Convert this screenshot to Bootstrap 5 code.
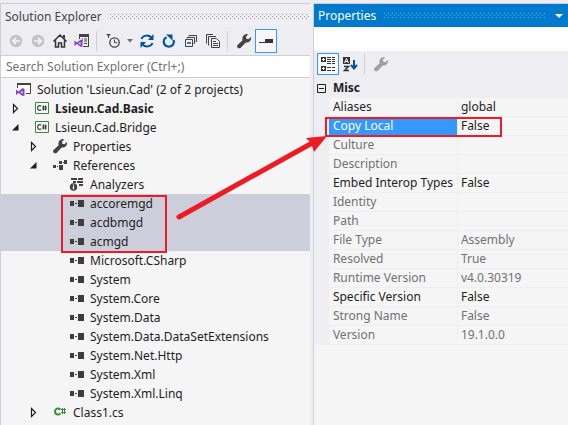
<!DOCTYPE html>
<html lang="en">
<head>
<meta charset="utf-8">
<meta name="viewport" content="width=device-width, initial-scale=1">
<title>Solution Explorer</title>
<link href="https://cdn.jsdelivr.net/npm/bootstrap@5.3.0/dist/css/bootstrap.min.css" rel="stylesheet">
<style>
:root{--chrome:#eeeef2;--line:#cccedb;--pane:#f5f5f5;--ink:#1e1e1e;--red:#ed1c24;--blue:#3399ff}
body{font-family:"Noto Sans","Open Sans",sans-serif;font-size:12px;line-height:19px;color:var(--ink);background:var(--chrome)}
.ide{gap:3px;padding-top:3px}
.tool-pane{border-left:1px solid var(--line);border-top:1px solid var(--line);min-width:0}
.explorer{flex:310 1 0}
.props{flex:255 1 0}
.pane-title{height:24px;gap:8px}
.pane-title h1{font-size:12px;line-height:19px;margin:0;font-weight:400}
.explorer .pane-title{color:#444;padding-left:4px}
.props .pane-title{color:#fff;background:#007acc;padding:0 3px 0 4px;height:23px}
.grip{height:5px;--dot:#999;background:conic-gradient(from 0deg at 1px 1px,transparent 75%,var(--dot) 0) 0 0/4px 4px,conic-gradient(from 0deg at 1px 1px,transparent 75%,var(--dot) 0) 2px 2px/4px 4px}
.props .grip{--dot:#59a8de}
.tb{border:1px solid transparent;background:none;padding:0;width:22px;height:24px;display:flex;align-items:center;justify-content:center;flex:none}
.props .tb{height:22px}
.tb.slim{width:12px}
.tb.on{border-color:var(--blue);background:#f7f7fa}
.tb svg,.pane-title svg,.tree svg{display:block;flex:none}
.bar{height:27px;padding-bottom:2px}
.explorer .bar{padding-left:4px}
.props .bar{height:28px;padding-left:3px}
.vsep{width:1px;height:20px;background:var(--line);flex:none;margin:0 5px 0 3px}
.find{height:23px;border:solid var(--line);border-width:1px 0;background:#fff;padding:0 5px;width:100%;color:#555;font-size:12px;border-radius:0;outline:0}
.find::placeholder{color:#717171;opacity:1}
.tree{background:var(--pane);padding-top:2px}
.node{height:19px;white-space:nowrap}
.node>button{border:0;background:none;padding:0;width:18px;height:19px;display:flex;align-items:center;justify-content:center}
.node>svg{width:16px;height:16px;margin-bottom:1px}
.ic{width:16px;height:16px}
.lv0{padding-left:15px;gap:5px}
.lv1{padding-left:5px}.node.lv1>svg{margin:0 5px 1px 10px}
.lv2{padding-left:23px}.node.lv2>svg{margin:0 5px 1px 10px}
.lv3{padding-left:68px;gap:5px}
.chosen{background:var(--line);position:relative}
.chosen::after{content:"";position:absolute;left:60px;top:1px;width:106px;height:58px;border:2px solid var(--red)}
.combo{height:24px;background:#fff}
.grid-table{table-layout:fixed;width:100%;border-collapse:separate;border-spacing:0}
.grid-table th,.grid-table td{height:19px;line-height:18px;padding:0 0 0 4px;font-weight:400;white-space:nowrap;overflow:hidden;border-bottom:1px solid var(--chrome);background:var(--pane)}
.grid-table td{padding-left:3px}
.grid-table th[scope=row]{border-right:1px solid var(--chrome)}
.grid-table .gut,.grid-table .cat{background:var(--chrome)}
.grid-table .cat{font-weight:700}
.c-gut{width:15px}.c-name{width:129px}
.off th[scope=row],.off td{color:#717171}
.grid-table .picked th{background:var(--blue);color:#fff;position:relative;overflow:visible}
.picked th::after{content:"";position:absolute;left:-4px;top:0;width:177px;height:20px;border:2px solid var(--red)}
.rest{background:var(--pane)}
.arrow{position:absolute;left:0;top:0;pointer-events:none}
</style>
<script src="https://cdn.jsdelivr.net/npm/bootstrap@5.3.0/dist/js/bootstrap.bundle.min.js"></script>
</head>
<body class="overflow-hidden">
<svg class="d-none" xmlns="http://www.w3.org/2000/svg">
<symbol id="wrench" viewBox="0 0 16 16"><path d="M1.300 12.300 6.600 7.200C5.900 4.500 7.200 1.800 10.200 1.100l2 .1-2.300 2.500.4 2.100 2.100.4L15 3.900c.7 3.300-1.600 6.100-5.300 5.600L4.500 14.900c-2.100 1.200-4.100-.8-3.200-2.600Z"/></symbol>
<symbol id="asm" viewBox="0 0 16 16"><path fill="#3d3d3d" d="M1 6h4v5H1zM6 8h2v1H6zM9 5h6v7H9z"/></symbol>
<symbol id="cs" viewBox="0 0 16 16"><path fill="#f7f7f7" stroke="#388a34" d="M1.500 2.500h13v11h-13z"/><path fill="none" stroke="#424242" stroke-width="1.200" d="M7.200 6.200C5.500 5 3.600 6 3.600 8s1.900 3 3.600 1.800"/><path fill="none" stroke="#424242" d="M9.500 5.500v5M11.500 5.500v5M8 7h5M8 9h5"/></symbol>
<symbol id="shut" viewBox="0 0 9 11"><path fill="#fff" stroke="#1e1e1e" stroke-width="1.200" d="M2.500 1.500v8L6.500 5.500z"/></symbol>
<symbol id="opened" viewBox="0 0 9 11"><path fill="#1e1e1e" d="M7.500 2v6.500H1z"/></symbol>
</svg>
<div class="ide d-flex vh-100 position-relative">
<section class="tool-pane explorer d-flex flex-column">
 <header class="pane-title d-flex align-items-center"><h1>Solution Explorer</h1><span class="grip flex-grow-1"></span></header>
 <div class="bar d-flex align-items-center" role="toolbar" aria-label="Explorer commands">
  <button class="tb" aria-label="Back"><svg class="ic" viewBox="0 0 16 16"><circle cx="8" cy="8" r="6.200" fill="#c3c3c6"/><path d="M12 8H5M8 4.800 4.800 8 8 11.200" stroke="#f4f4f6" stroke-width="1.700" fill="none"/></svg></button>
  <button class="tb" aria-label="Forward"><svg class="ic" viewBox="0 0 16 16"><circle cx="8" cy="8" r="6.200" fill="#c3c3c6"/><path d="M4 8h7M8 4.800 11.200 8 8 11.200" stroke="#f4f4f6" stroke-width="1.700" fill="none"/></svg></button>
  <button class="tb" aria-label="Home"><svg class="ic" viewBox="0 0 16 16"><path d="m1.500 8.500 6.500-6.500 6.500 6.500M3.500 7.500v6.500h3v-4h3v4h3V7.500" fill="none" stroke="#333" stroke-width="1.500"/><path d="M11 2h2v4l-2-2z" fill="#333"/></svg></button>
  <button class="tb" aria-label="Solution view"><svg class="ic" viewBox="0 0 16 16"><path fill="#424242" d="M5 1h10v13H9v-1h5V4H6v2H5z"/><path d="M8 6h1M10 6h3M10 8h3M10 10.500h3M8 8h1" stroke="#424242" fill="none"/><path d="m.5 7.500 2.500 2 4-3 1.500.7v6L7 14l-4-3-2.500 2zM6.500 9 4.500 10.300l2 1.500z" fill="#8a3fd0" fill-rule="evenodd"/></svg></button>
  <span class="vsep"></span>
  <button class="tb" aria-label="Pending changes filter"><svg class="ic" viewBox="0 0 16 16"><path d="M1 1h5L4 3v2H3V3z" fill="#424242"/><circle cx="9.500" cy="9.500" r="4.700" fill="none" stroke="#424242" stroke-width="1.300"/><path d="M9.500 6.500v3.200h2.700" fill="none" stroke="#424242"/></svg></button>
  <button class="tb slim" aria-label="Filter options"><svg width="6" height="4" viewBox="0 0 6 4"><path d="M0 0h6L3 3.500z" fill="#717171"/></svg></button>
  <button class="tb" aria-label="Sync"><svg class="ic" viewBox="0 0 16 16"><g fill="none" stroke="#00539c" stroke-width="2"><path d="M2.500 6C4 2 9.500 1.500 12.500 4.500M13.500 10C12 14 6.500 14.500 3.500 11.500"/></g><path d="M14.500 1v6H9zM1.500 15V9H7z" fill="#00539c"/></svg></button>
  <button class="tb" aria-label="Refresh"><svg class="ic" viewBox="0 0 16 16"><path d="M5.500 4.200A5 5 0 1 0 12.500 7" fill="none" stroke="#00539c" stroke-width="2.300"/><path d="M5 1.500h6.500V7.500z" fill="#00539c"/></svg></button>
  <button class="tb" aria-label="Collapse all"><svg class="ic" viewBox="0 0 16 16"><path d="M6 3.500V2.500h7.500v6h-1M4 5.500V4.500h7.500v6h-1M2.500 6.500h7v7h-7z" fill="none" stroke="#424242"/><path d="M4 10h4" stroke="#00539c" stroke-width="1.500"/></svg></button>
  <button class="tb" aria-label="Show all files"><svg class="ic" viewBox="0 0 16 16"><path d="M1.500 10.500v-9H8M3.500 12.500v-9H11M6.500 5.500h5l3 3v6h-8z" fill="none" stroke="#424242"/><path d="M8 8.500h3M8 10.500h5M8 12.500h5" stroke="#424242"/></svg></button>
  <span class="vsep"></span>
  <button class="tb" aria-label="Properties"><svg class="ic" fill="#424242"><use href="#wrench"/></svg></button>
  <button class="tb on" aria-label="Preview selected items" aria-pressed="true"><svg class="ic" viewBox="0 0 16 16"><path d="M1 9h14v1H1zM7 6h8v4H7z" fill="#333"/></svg></button>
 </div>
 <input class="find" type="search" aria-label="Search Solution Explorer" placeholder="Search Solution Explorer (Ctrl+;)">
 <ul class="tree list-unstyled mb-0 flex-grow-1">
  <li class="node lv0 d-flex align-items-center"><svg viewBox="0 0 16 16"><path d="M1.500 7V2.500h13v10H10" fill="#fff" stroke="#424242"/><path d="M1 2h14v2H1z" fill="#424242"/><path d="m0 8.500 2.500 2 4-3.500L8.500 8v6.500L6.500 15l-4-3L0 14zM6.500 10 4.500 11.300l2 1.500z" fill="#8a3fd0" fill-rule="evenodd"/></svg><span>Solution 'Lsieun.Cad' (2 of 2 projects)</span></li>
  <li class="node lv1 d-flex align-items-center"><button aria-label="Expand"><svg width="9" height="11"><use href="#shut"/></svg></button><svg><use href="#cs"/></svg><b>Lsieun.Cad.Basic</b></li>
  <li class="node lv1 d-flex align-items-center"><button aria-label="Collapse"><svg width="9" height="11"><use href="#opened"/></svg></button><svg><use href="#cs"/></svg><span>Lsieun.Cad.Bridge</span></li>
  <li class="node lv2 d-flex align-items-center"><button aria-label="Expand"><svg width="9" height="11"><use href="#shut"/></svg></button><svg fill="#424242"><use href="#wrench"/></svg><span>Properties</span></li>
  <li class="node lv2 d-flex align-items-center"><button aria-label="Collapse"><svg width="9" height="11"><use href="#opened"/></svg></button><svg viewBox="0 0 16 16"><path fill="#424242" d="M1 8h3v3H1zM5 9h1v1H5zM7 8h4v5H7zM7 4h3v3H7zM11 5h1v1h-1zM12 3h3v4h-3z"/></svg><span>References</span></li>
  <li class="node lv3 d-flex align-items-center"><svg viewBox="0 0 16 16"><path fill="#424242" d="M2 2h6v2H2zM9 2h5v2H9zM4 5h3v2H4zM8 5h6v2H8zM10 8h4v2h-4z"/><circle cx="4.500" cy="11" r="3.700" fill="#424242"/><path d="M4.500 8.500v1M4.500 10.300v3" stroke="#fff" stroke-width="1.300"/></svg><span>Analyzers</span></li>
  <li><ul class="chosen list-unstyled">
   <li class="node lv3 d-flex align-items-center"><svg><use href="#asm"/></svg><span>accoremgd</span></li>
   <li class="node lv3 d-flex align-items-center"><svg><use href="#asm"/></svg><span>acdbmgd</span></li>
   <li class="node lv3 d-flex align-items-center"><svg><use href="#asm"/></svg><span>acmgd</span></li>
  </ul></li>
  <li class="node lv3 d-flex align-items-center"><svg><use href="#asm"/></svg><span>Microsoft.CSharp</span></li>
  <li class="node lv3 d-flex align-items-center"><svg><use href="#asm"/></svg><span>System</span></li>
  <li class="node lv3 d-flex align-items-center"><svg><use href="#asm"/></svg><span>System.Core</span></li>
  <li class="node lv3 d-flex align-items-center"><svg><use href="#asm"/></svg><span>System.Data</span></li>
  <li class="node lv3 d-flex align-items-center"><svg><use href="#asm"/></svg><span>System.Data.DataSetExtensions</span></li>
  <li class="node lv3 d-flex align-items-center"><svg><use href="#asm"/></svg><span>System.Net.Http</span></li>
  <li class="node lv3 d-flex align-items-center"><svg><use href="#asm"/></svg><span>System.Xml</span></li>
  <li class="node lv3 d-flex align-items-center"><svg><use href="#asm"/></svg><span>System.Xml.Linq</span></li>
  <li class="node lv2 d-flex align-items-center"><button aria-label="Expand"><svg width="9" height="11"><use href="#shut"/></svg></button><svg viewBox="0 0 16 16"><path fill="none" stroke="#388a34" stroke-width="2" d="M8.500 5.500C6 3.500 3 4.500 3 7.500s3 4 5.500 2"/><path fill="none" stroke="#388a34" d="M10.500 4v6M12.500 4v6M9 5.500h5M9 8.500h5"/></svg><span>Class1.cs</span></li>
 </ul>
</section>
<section class="tool-pane props d-flex flex-column">
 <header class="pane-title d-flex align-items-center"><h1>Properties</h1><span class="grip flex-grow-1"></span><button class="tb slim" aria-label="Window position"><svg width="8" height="4" viewBox="0 0 8 4"><path d="M0 0h8L4 4z" fill="#fff"/></svg></button></header>
 <div class="combo"></div>
 <div class="bar d-flex align-items-center" role="toolbar" aria-label="Property views">
  <button class="tb on" aria-label="Categorized" aria-pressed="true"><svg class="ic" viewBox="0 0 16 16"><path fill="#333" fill-rule="evenodd" d="M1 1h5v5H1zM2 3v1h1v1h1V4h1V3H4V2H3v1zM1 10h5v5H1zM2 12v1h1v1h1v-1h1v-1H4v-1H3v1zM7 1h4v1H7zM12 1h3v1h-3zM7 3h4v1H7zM12 3h3v1h-3zM7 5h4v1H7zM12 5h3v1h-3zM7 7h4v1H7zM12 7h3v1h-3zM7 11h4v1H7zM12 11h3v1h-3zM7 14h4v1H7zM12 14h3v1h-3z"/></svg></button>
  <button class="tb" aria-label="Alphabetical"><svg class="ic" viewBox="0 0 16 16"><path fill="#333" d="M1 1h7v7H1z"/><path d="M2.500 7 4.500 2.500 6.500 7M3 5.500h3" fill="none" stroke="#fff"/><path d="M2 10.500h4.500L2.500 14.500H7" fill="none" stroke="#333" stroke-width="1.500"/><path d="M12 4v8M9 9l3 3.500L15 9" fill="none" stroke="#00539c" stroke-width="2"/></svg></button>
  <span class="vsep"></span>
  <button class="tb" aria-label="Property pages"><svg class="ic" fill="#a0a0a0"><use href="#wrench"/></svg></button>
 </div>
 <table class="grid-table">
  <colgroup><col class="c-gut"><col class="c-name"><col></colgroup>
  <tbody>
  <tr><td class="gut"><svg class="d-block" width="9" height="9" viewBox="0 0 9 9"><path d="M.5.5h8v8h-8zM2 4.500h5" fill="none" stroke="#1e1e1e"/></svg></td><th class="cat" colspan="2" scope="rowgroup">Misc</th></tr>
  <tr><td class="gut"></td><th scope="row">Aliases</th><td>global</td></tr>
  <tr class="picked"><td class="gut"></td><th scope="row">Copy Local</th><td>False</td></tr>
  <tr class="off"><td class="gut"></td><th scope="row">Culture</th><td></td></tr>
  <tr class="off"><td class="gut"></td><th scope="row">Description</th><td></td></tr>
  <tr><td class="gut"></td><th scope="row">Embed Interop Types</th><td>False</td></tr>
  <tr class="off"><td class="gut"></td><th scope="row">Identity</th><td></td></tr>
  <tr class="off"><td class="gut"></td><th scope="row">Path</th><td></td></tr>
  <tr class="off"><td class="gut"></td><th scope="row">File Type</th><td>Assembly</td></tr>
  <tr class="off"><td class="gut"></td><th scope="row">Resolved</th><td>True</td></tr>
  <tr class="off"><td class="gut"></td><th scope="row">Runtime Version</th><td>v4.0.30319</td></tr>
  <tr><td class="gut"></td><th scope="row">Specific Version</th><td>False</td></tr>
  <tr class="off"><td class="gut"></td><th scope="row">Strong Name</th><td>False</td></tr>
  <tr class="off"><td class="gut"></td><th scope="row">Version</th><td>19.1.0.0</td></tr>
  </tbody>
 </table>
 <div class="rest flex-grow-1"></div>
</section>
<svg class="arrow" width="340" height="240" viewBox="0 0 340 240" aria-hidden="true"><path d="M179 217 314 142" stroke="#ed1c24" stroke-width="5" stroke-linecap="round"/><path d="M327 136 306 138 311 143 314 152Z" fill="#ed1c24"/></svg>
</div>
</body>
</html>
